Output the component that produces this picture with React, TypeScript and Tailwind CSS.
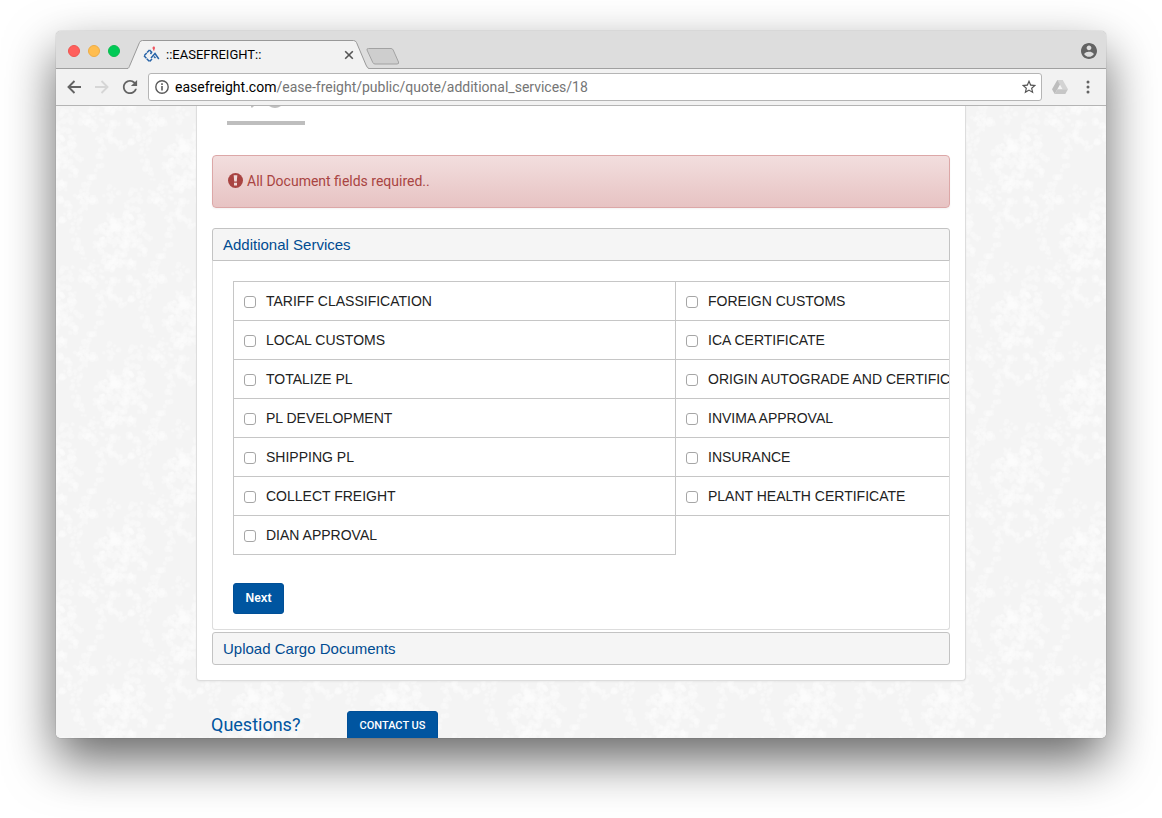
import React from "react";

const services: [string, string | null][] = [
  ["TARIFF CLASSIFICATION", "FOREIGN CUSTOMS"],
  ["LOCAL CUSTOMS", "ICA CERTIFICATE"],
  ["TOTALIZE PL", "ORIGIN AUTOGRADE AND CERTIFICATION"],
  ["PL DEVELOPMENT", "INVIMA APPROVAL"],
  ["SHIPPING PL", "INSURANCE"],
  ["COLLECT FREIGHT", "PLANT HEALTH CERTIFICATE"],
  ["DIAN APPROVAL", null],
];

// Petals of one damask motif: loose clusters scattered on both sides of its axis.
function buildPetals() {
  let seed = 23;
  const rnd = () => {
    seed = (seed * 16807) % 2147483647;
    return seed / 2147483647;
  };
  const petals: { x: number; y: number; r: number }[] = [];
  const cluster = (x: number, y: number, spread: number, count: number) => {
    for (let i = 0; i < count; i++) {
      petals.push({
        x: x + (rnd() - 0.5) * spread,
        y: y + (rnd() - 0.5) * spread,
        r: 1.2 + rnd() * 2,
      });
    }
  };
  for (let i = 0; i < 56; i++) {
    const a = rnd() * Math.PI * 2;
    const d = Math.sqrt(rnd());
    cluster(Math.sin(a) * d * 26, Math.cos(a) * d * 34, 9, 5);
  }
  for (const side of [-1, 1]) {
    for (let i = 0; i < 8; i++) {
      const a = (i / 8) * Math.PI;
      cluster(side * (Math.sin(a) * 13 + 1), 50 + Math.cos(a) * 12, 7, 4);
    }
    for (let i = 0; i < 9; i++) {
      const t = i / 9;
      cluster(side * (24 + Math.sin(t * Math.PI) * 24), 34 - t * 84, 8, 4 + Math.floor(rnd() * 4));
    }
    cluster(side * 34, 34, 18, 24);
    cluster(side * 12, -46, 16, 12);
  }
  return petals;
}
const petals = buildPetals();
const motifSpots = [
  [67, 134], [205, 134], [-71, 134], [67, -23], [67, 291],
  [-2, 55], [136, 55], [-2, 212], [136, 212], [-2, -102], [136, -102],
];

function Damask() {
  return (
    <svg className="absolute inset-0 h-full w-full" aria-hidden="true">
      <defs>
        <g id="motif">
          {petals.map((p, i) => (
            <circle key={i} cx={p.x} cy={p.y} r={p.r} fill="#fff" opacity={0.3} />
          ))}
        </g>
        <pattern id="damask" width="138" height="157" patternUnits="userSpaceOnUse">
          <rect width="138" height="157" fill="#f4f4f4" />
          <g opacity="0.75">
            {motifSpots.map(([x, y]) => (
              <use key={`${x},${y}`} href="#motif" x={x} y={y} />
            ))}
          </g>
        </pattern>
      </defs>
      <rect width="100%" height="100%" fill="url(#damask)" />
    </svg>
  );
}

function TabStrip() {
  return (
    <div className="relative flex h-[38px] shrink-0 items-start bg-[#dddddd] border-b border-[#a0a0a0]">
      <div className="flex gap-2 pl-3 pt-[14px]">
        <button aria-label="Close window" className="size-3 rounded-full border border-[#ee5550] bg-[#ff5f5c]" />
        <button aria-label="Minimize window" className="size-3 rounded-full border border-[#eeac45] bg-[#ffbd4f]" />
        <button aria-label="Zoom window" className="size-3 rounded-full border border-[#0cbb4f] bg-[#00ca56]" />
      </div>
      <div className="relative ml-[7px] mt-[9px] h-[29px] w-[242px]">
        <svg className="absolute left-0 top-0" width="242" height="29" viewBox="0 0 242 29" aria-hidden="true">
          <path d="M0 28.5 C2 28.5 2 27 3 25 L12.5 2.5 Q13.3 .5 15.5 .5 H226.5 Q228.5 .5 229.5 2.5 L239 25 Q240.5 28.5 242 28.5 V29 H0 Z" fill="#f2f2f2" />
          <path d="M0 28.5 C2 28.5 2 27 3 25 L12.5 2.5 Q13.3 .5 15.5 .5 H226.5 Q228.5 .5 229.5 2.5 L239 25 Q240.5 28.5 242 28.5" fill="none" stroke="#999" />
        </svg>
        <div className="relative flex h-[29px] items-center pl-4 pr-3">
          <svg width="17" height="17" viewBox="0 0 17 17" fill="none" aria-hidden="true">
            <path d="M6.500 4 L1 9.800 L6.500 15.500 L9 13" stroke="#2864a8" strokeWidth="1.500" strokeDasharray="3.500 .5" />
            <path d="M6.500 4 L9 6.500 M9 5.500 L7.500 8" stroke="#2864a8" strokeWidth="1.500" />
            <path d="M8 12 L12 7.500 L15.800 13 M11 10.500 L12.500 12" stroke="#2864a8" strokeWidth="1.500" />
            <path d="M10.800 .5 V4.500 M9.500 2 H12" stroke="#ee5560" strokeWidth="1.400" />
          </svg>
          <span className="ml-1.5 flex-1 font-[Roboto,sans-serif] text-[13px] leading-4 text-black">::EASEFREIGHT::</span>
          <button aria-label="Close tab" className="flex size-4 items-center justify-center">
            <svg width="10" height="10" viewBox="0 0 10 10"><path d="M1.200 1.200 L8.800 8.800 M8.800 1.200 L1.200 8.800" stroke="#555" strokeWidth="1.600" /></svg>
          </button>
        </div>
      </div>
      <button aria-label="New tab" className="-ml-[3px] mt-[17px]">
        <svg width="34" height="17" viewBox="0 0 34 17"><path d="M2.500 .5 H25 Q26.500 .5 27.200 2 L32.500 14 Q33.300 16 31 16 H9 Q7.500 16 6.800 14.500 L1 2 Q.5 .5 2.500 .5 Z" fill="#cecece" stroke="#a2a2a2" /></svg>
      </button>
      <button aria-label="Profile" className="ml-auto mr-[9px] mt-3">
        <svg width="16" height="16" viewBox="2 2 20 20"><path fill="#636363" d="M12 2C6.480 2 2 6.480 2 12s4.480 10 10 10 10-4.480 10-10S17.520 2 12 2zm0 3c1.660 0 3 1.340 3 3s-1.340 3-3 3-3-1.340-3-3 1.340-3 3-3zm0 14.200c-2.500 0-4.710-1.280-6-3.220.03-1.990 4-3.080 6-3.080 1.990 0 5.970 1.090 6 3.080-1.290 1.940-3.500 3.220-6 3.220z" /></svg>
      </button>
    </div>
  );
}

function Toolbar() {
  return (
    <div className="flex h-[37px] shrink-0 items-center border-b border-[#b4b4b4] bg-[#f2f2f2]">
      <button aria-label="Back" className="ml-2.5">
        <svg width="16" height="16" viewBox="0 0 16 16"><path d="M15 8 H2.500 M8.500 2 L2.500 8 L8.500 14" fill="none" stroke="#636363" strokeWidth="1.900" /></svg>
      </button>
      <button aria-label="Forward" className="ml-3">
        <svg width="16" height="16" viewBox="0 0 16 16"><path d="M1 8 H13.500 M7.500 2 L13.500 8 L7.500 14" fill="none" stroke="#d6d6d6" strokeWidth="1.900" /></svg>
      </button>
      <button aria-label="Reload" className="ml-3">
        <svg width="16" height="16" viewBox="3 3 18 18"><path fill="#636363" d="M17.650 6.350C16.200 4.900 14.210 4 12 4c-4.420 0-7.990 3.580-7.990 8s3.570 8 7.990 8c3.730 0 6.840-2.550 7.730-6h-2.080c-.82 2.330-3.040 4-5.650 4-3.310 0-6-2.690-6-6s2.690-6 6-6c1.660 0 3.140.69 4.220 1.780L13 11h7V4l-2.350 2.350z" /></svg>
      </button>
      <div className="ml-2.5 flex h-7 flex-1 items-center rounded-[3px] border border-[#b5b5b5] bg-white px-1.5">
        <svg width="14" height="14" viewBox="0 0 14 14" aria-hidden="true"><circle cx="7" cy="7" r="6.200" fill="none" stroke="#5a5a5a" strokeWidth="1.400" /><path d="M7 6 V10.500 M7 3.300 V4.900" stroke="#5a5a5a" strokeWidth="1.600" /></svg>
        <div className="ml-1.5 flex-1 font-[Roboto,sans-serif] text-sm leading-5 text-[#757575]">
          <span className="text-black">easefreight.com</span>/ease-freight/public/quote/additional_services/18
        </div>
        <button aria-label="Bookmark this page" className="-mr-0.5">
          <svg width="16" height="16" viewBox="1 1 22 22"><path fill="#555" d="M22 9.240l-7.190-.62L12 2 9.190 8.630 2 9.240l5.460 4.730L5.820 21 12 17.270 18.180 21l-1.630-7.030L22 9.240zM12 15.400l-3.760 2.270 1-4.280-3.320-2.880 4.380-.38L12 6.100l1.710 4.040 4.380.38-3.320 2.880 1 4.280L12 15.400z" /></svg>
        </button>
      </div>
      <button aria-label="Google Drive" className="ml-2.5">
        <svg width="16" height="14" viewBox="0 0 16 14"><path d="M5.300 0 H10.700 L8 4.600 Z M5.300 0 L0 9.300 L2.700 14 L8 4.600 Z" fill="#bdbdbd" /><path d="M5.300 0 H10.700 L16 9.300 H10.600 Z" fill="#d3d3d3" /><path d="M5.400 9.300 H16 L13.300 14 H2.700 Z" fill="#c6c6c6" /></svg>
      </button>
      <button aria-label="Menu" className="ml-3 mr-2.5">
        <svg width="16" height="16" viewBox="0 0 16 16" fill="#636363"><circle cx="8" cy="3" r="1.500" /><circle cx="8" cy="8" r="1.500" /><circle cx="8" cy="13" r="1.500" /></svg>
      </button>
    </div>
  );
}

function ServiceCell({ name }: { name: string }) {
  return (
    <td className="h-[39px] w-[442px] border border-[#c6c6c6] p-0">
      <label className="flex items-center gap-2.5 whitespace-nowrap pl-2.5 text-sm leading-5 text-[#222]">
        <input type="checkbox" className="relative top-px size-3 appearance-none rounded-[3px] border border-[#a6a6a6] bg-white checked:bg-[#0055a0]" />
        {name}
      </label>
    </td>
  );
}

export default function App() {
  return (
    <div className="flex h-screen flex-col bg-white px-14 pb-20 pt-[31px] font-['Liberation_Sans',Arial,sans-serif]">
      <div className="flex min-h-0 flex-1 flex-col overflow-hidden rounded-[5px] shadow-[0_0_1px_rgba(0,0,0,0.5),0_22px_50px_rgba(0,0,0,0.6)]">
        <TabStrip />
        <Toolbar />
        <div className="relative min-h-0 flex-1 overflow-hidden bg-[#f4f4f4]">
          <Damask />
          <main className="relative mx-auto w-full max-w-[770px]">
            <section className="rounded-b border border-t-0 border-[#dddddd] bg-white px-[15px] pb-[15px] shadow-[0_1px_2px_rgba(0,0,0,0.05)]">
              <div className="ml-[15px] h-[19px] w-[78px] border-b-4 border-[#bebebe]">
                <svg width="78" height="3" viewBox="0 0 78 3" aria-hidden="true"><path d="M24 0 H27 L25.500 1.500 H24 Z M42 0 H54 Q48 4 42 0 Z" fill="#bebebe" /></svg>
              </div>
              <div role="alert" className="mt-[30px] flex h-[53px] items-start rounded border border-[#dca7a7] bg-linear-to-b from-[#f2dede] to-[#e7c3c3] px-[15px] pt-[15px] text-[#a94442] shadow-[0_1px_2px_rgba(0,0,0,0.05)]">
                <svg className="mt-0.5" width="15" height="15" viewBox="0 0 14 14" aria-hidden="true"><circle cx="7" cy="7" r="7" fill="#a94442" /><path d="M5.300 2.200 H8.700 L8.200 8 H5.800 Z M5.600 9.200 H8.400 V11.600 H5.600 Z" fill="#f0dada" /></svg>
                <span className="ml-1 font-[Roboto,sans-serif] text-sm leading-5">All Document fields required..</span>
              </div>
              <div className="mt-5">
                <h4 className="flex h-[33px] items-center rounded-t-[3px] border border-[#c3c3c3] bg-[#f5f5f5] px-2.5 text-[15px] leading-5">
                  <a href="#services" className="text-[#004b91]">Additional Services</a>
                </h4>
                <div id="services" className="overflow-hidden rounded-b-[3px] border border-t-0 border-[#dddddd] px-5 pb-[15px] pt-5">
                  <table className="w-[885px] table-fixed border-collapse">
                    <tbody>
                      {services.map(([left, right]) => (
                        <tr key={left}>
                          <ServiceCell name={left} />
                          {right ? <ServiceCell name={right} /> : <td />}
                        </tr>
                      ))}
                    </tbody>
                  </table>
                  <button className="mt-7 block h-[31px] w-[51px] rounded-[3px] border border-[#004f97] bg-[#0055a0] pb-0.5 text-xs font-bold leading-4 text-white">Next</button>
                </div>
              </div>
              <h4 className="mt-0.5 flex h-[33px] items-center rounded-[3px] border border-[#c3c3c3] bg-[#f5f5f5] px-2.5 text-[15px] leading-5">
                <a href="#documents" className="text-[#004b91]">Upload Cargo Documents</a>
              </h4>
            </section>
            <div className="flex items-start gap-12 pl-[15px] pt-[30px]">
              <h3 className="w-[88px] pt-0.5 font-[Roboto,sans-serif] text-lg leading-6 text-[#0055a0]">Questions?</h3>
              <button className="h-[31px] w-[91px] rounded-[3px] border border-[#004f97] bg-[#0055a0] pb-0.5 font-[Roboto,sans-serif] text-[11px] font-medium leading-4 text-white">CONTACT US</button>
            </div>
          </main>
        </div>
      </div>
    </div>
  );
}
